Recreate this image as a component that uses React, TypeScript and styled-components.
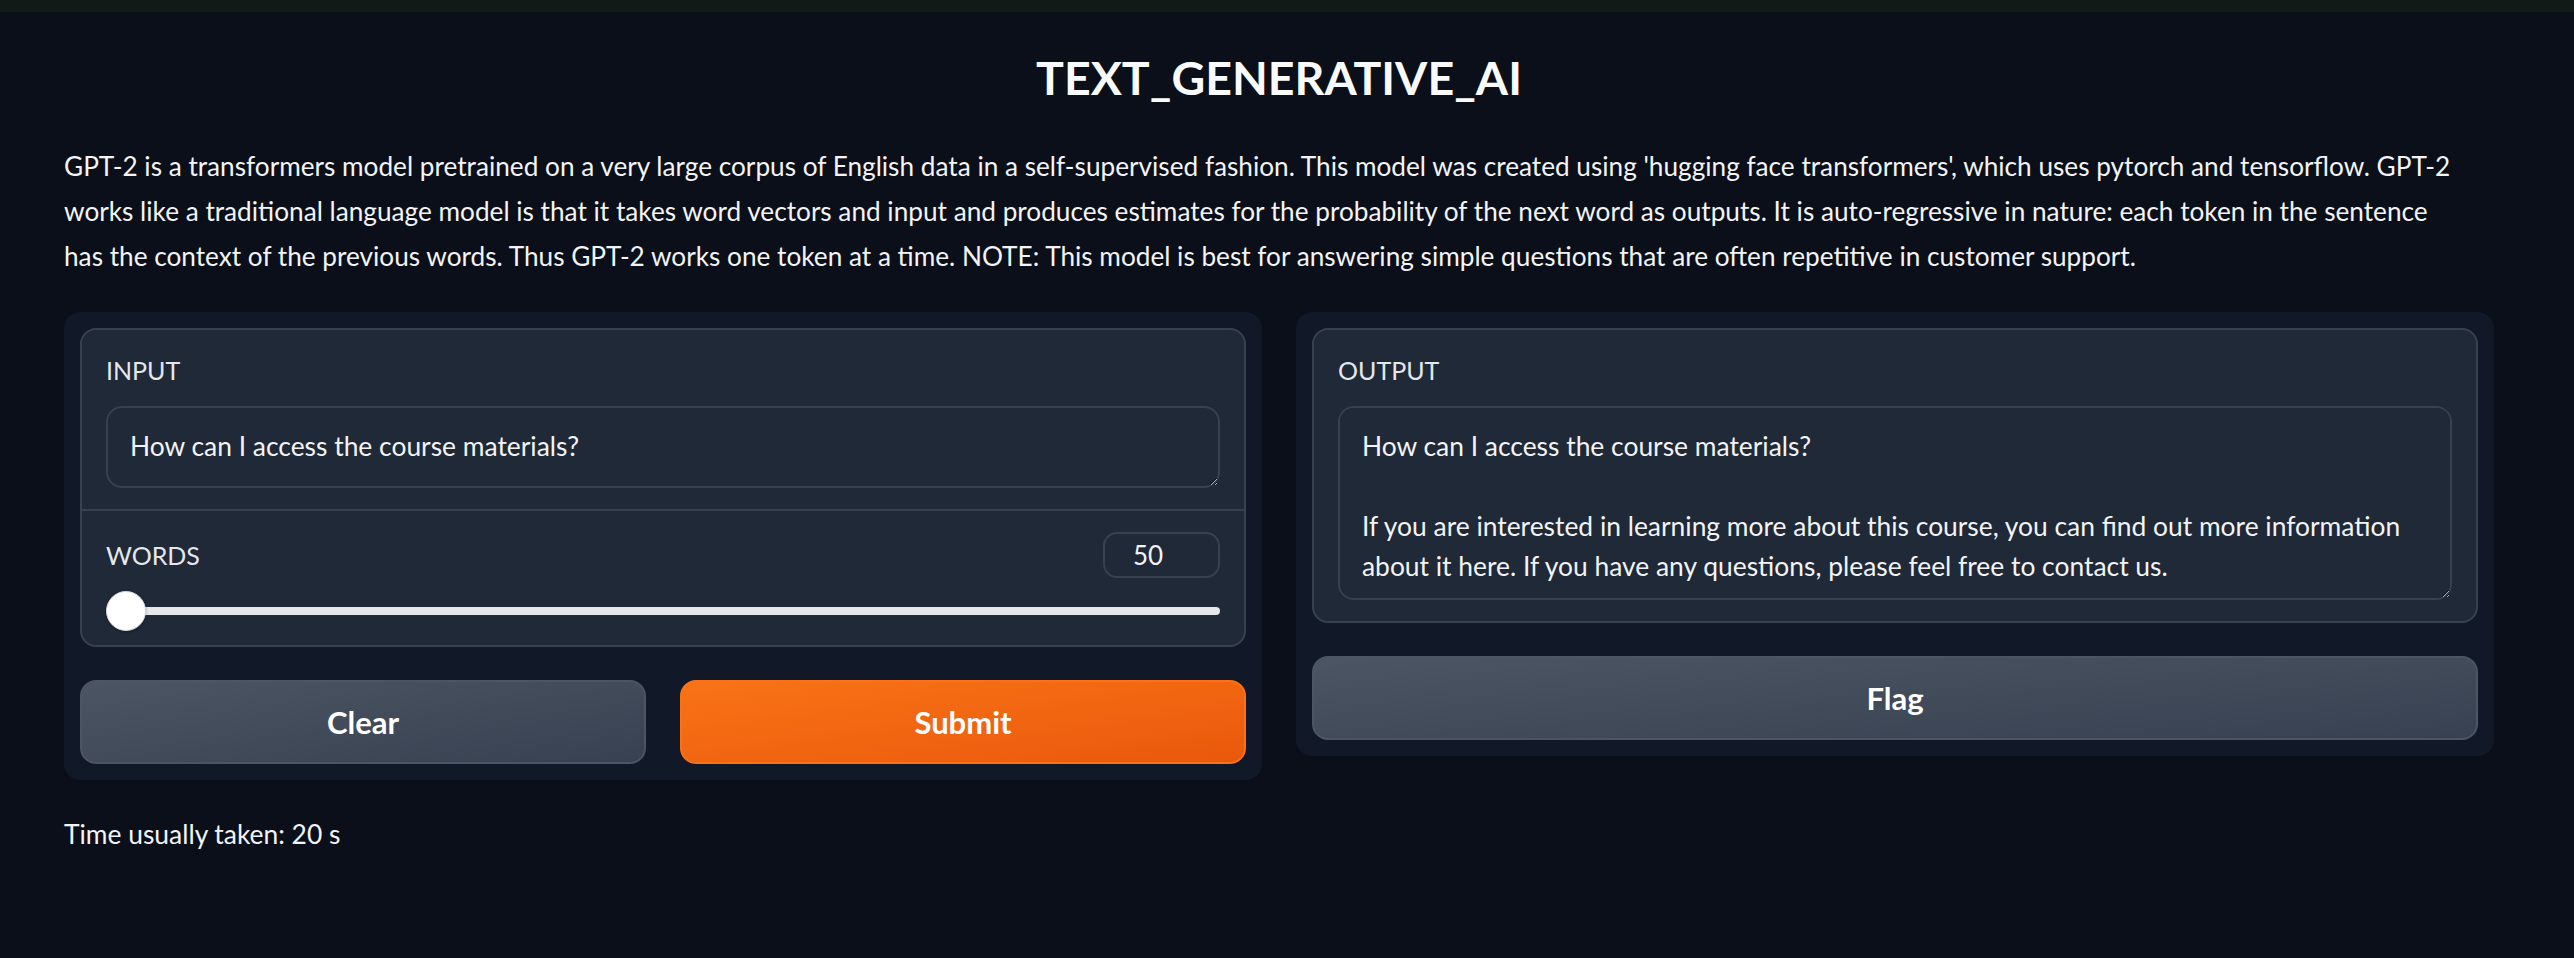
import React from "react";
import styled, { createGlobalStyle } from "styled-components";

const GlobalStyle = createGlobalStyle`
  html, body {
    margin: 0;
    padding: 0;
    background: #0b0f19;
    color: #f3f4f6;
    font-family: Lato, "Liberation Sans", sans-serif;
  }
  * {
    box-sizing: border-box;
  }
`;

const TopStrip = styled.div`
  height: 12px;
  background: #111a17;
`;

const Container = styled.main`
  width: 2430px;
  margin-left: 64px;
`;

const Title = styled.h1`
  margin: 37px 0 0;
  font-size: 46.5px;
  line-height: 57px;
  font-weight: 700;
  text-align: center;
  color: #f9fafb;
`;

const Description = styled.p`
  margin: 38px 0 0;
  font-size: 26.2px;
  line-height: 45px;
  color: #f3f4f6;
`;

const Columns = styled.div`
  display: grid;
  grid-template-columns: 1fr 1fr;
  gap: 34px;
  align-items: start;
  margin-top: 33px;
`;

const Panel = styled.section`
  display: flex;
  flex-direction: column;
  gap: 33px;
  padding: 16px;
  background: #111827;
  border-radius: 16px;
`;

const Form = styled.div`
  background: #1f2937;
  border: 2px solid #374151;
  border-radius: 16px;
  overflow: hidden;
`;

const Field = styled.div<{ $divider?: boolean; $bottom?: number }>`
  padding: ${(p) => (p.$divider ? 21 : 20)}px 24px ${(p) => p.$bottom ?? 21}px;
  border-top: ${(p) => (p.$divider ? "2px solid #374151" : "none")};
`;

const Label = styled.div`
  font-size: 25px;
  line-height: 40px;
  color: #e5e7eb;
`;

const TextBox = styled.textarea<{ $height: number }>`
  display: block;
  width: 100%;
  height: ${(p) => p.$height}px;
  margin-top: 16px;
  padding: 18px 22px;
  background: #1f2937;
  border: 2px solid #374151;
  border-radius: 16px;
  color: #f3f4f6;
  font-family: Lato, "Liberation Sans", sans-serif;
  font-size: 26.4px;
  line-height: 40px;
  resize: vertical;
  color-scheme: dark;
  outline: none;
`;

const SliderHead = styled.div`
  display: flex;
  justify-content: space-between;
  align-items: center;
  height: 46px;
`;

const NumberBox = styled.input`
  width: 117px;
  height: 46px;
  padding: 0 0 0 28px;
  background: transparent;
  border: 2px solid #374151;
  border-radius: 14px;
  color: #f3f4f6;
  font-family: Lato, "Liberation Sans", sans-serif;
  font-size: 26px;
  outline: none;
`;

const Range = styled.input`
  display: block;
  width: 100%;
  height: 40px;
  margin: 13px 0 0;
  background: transparent;
  appearance: none;
  -webkit-appearance: none;

  &::-webkit-slider-runnable-track {
    height: 8px;
    border-radius: 4px;
    background: #e5e7eb;
  }

  &::-webkit-slider-thumb {
    -webkit-appearance: none;
    width: 40px;
    height: 40px;
    margin-top: -16px;
    border-radius: 50%;
    background: #ffffff;
    border: 1px solid #d1d5db;
    box-shadow: 0 1px 3px rgba(0, 0, 0, 0.3);
  }
`;

const ButtonRow = styled.div`
  display: grid;
  grid-template-columns: 1fr 1fr;
  gap: 34px;
`;

const Button = styled.button<{ $primary?: boolean }>`
  height: 84px;
  border-radius: 16px;
  border: 2px solid ${(p) => (p.$primary ? "#f97316" : "#4b5563")};
  background: ${(p) =>
    p.$primary
      ? "linear-gradient(to bottom right, #f97316, #ea580c)"
      : "linear-gradient(to bottom right, #4b5563, #374151)"};
  color: #ffffff;
  font-family: Lato, "Liberation Sans", sans-serif;
  font-size: 31px;
  font-weight: 700;
  cursor: pointer;
`;

const Footnote = styled.p`
  margin: 32px 0 0;
  font-size: 26.4px;
  line-height: 45px;
  color: #f3f4f6;
`;

// line breaks follow the reference rendering
const descriptionLines = [
  "GPT-2 is a transformers model pretrained on a very large corpus of English data in a self-supervised fashion. This model was created using 'hugging face transformers', which uses pytorch and tensorflow. GPT-2",
  "works like a traditional language model is that it takes word vectors and input and produces estimates for the probability of the next word as outputs. It is auto-regressive in nature: each token in the sentence",
  "has the context of the previous words. Thus GPT-2 works one token at a time. NOTE: This model is best for answering simple questions that are often repetitive in customer support.",
];

const question = "How can I access the course materials?";
const answer =
  question +
  "\n\nIf you are interested in learning more about this course, you can find out more information about it here. If you have any questions, please feel free to contact us.";

const App = () => {
  return (
    <>
      <GlobalStyle />
      <TopStrip />
      <Container>
        <Title>TEXT_GENERATIVE_AI</Title>
        <Description>
          {descriptionLines.map((line, i) => (
            <React.Fragment key={i}>
              {line}
              {i < descriptionLines.length - 1 && <br />}
            </React.Fragment>
          ))}
        </Description>
        <Columns>
          <Panel>
            <Form>
              <Field>
                <Label>INPUT</Label>
                <TextBox $height={82} defaultValue={question} rows={1} />
              </Field>
              <Field $divider $bottom={14}>
                <SliderHead>
                  <Label>WORDS</Label>
                  <NumberBox type="text" defaultValue="50" />
                </SliderHead>
                <Range type="range" min={50} max={500} defaultValue={50} />
              </Field>
            </Form>
            <ButtonRow>
              <Button>Clear</Button>
              <Button $primary>Submit</Button>
            </ButtonRow>
          </Panel>
          <Panel>
            <Form>
              <Field>
                <Label>OUTPUT</Label>
                <TextBox $height={194} defaultValue={answer} readOnly />
              </Field>
            </Form>
            <Button>Flag</Button>
          </Panel>
        </Columns>
        <Footnote>Time usually taken: 20 s</Footnote>
      </Container>
    </>
  );
};

export default App;
